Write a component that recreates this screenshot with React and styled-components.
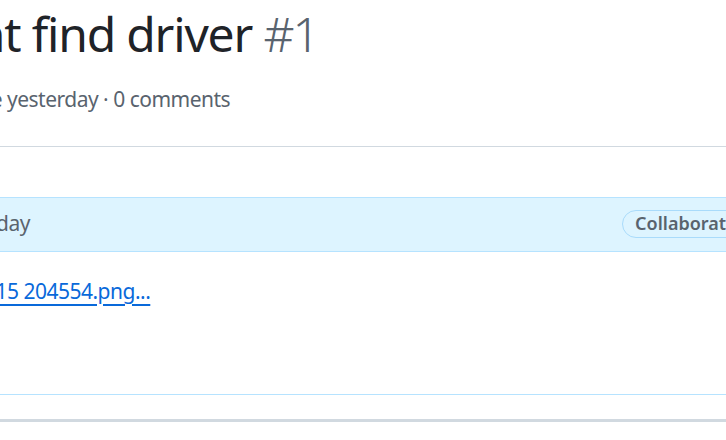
import React from "react";
import styled, { createGlobalStyle } from "styled-components";

const Global = createGlobalStyle`
  html, body { margin: 0; padding: 0; background: #ffffff; }
  body {
    font-family: "Segoe UI", "Noto Sans", "Liberation Sans", sans-serif;
    color: #1f2328;
  }
`;

const Viewport = styled.div`
  width: 726px;
  height: 440px;
  overflow: hidden;
  background: #ffffff;
`;

const Shifted = styled.div`
  margin-left: ${(p) => -p.$shift}px;
  white-space: nowrap;
`;

const Header = styled.header`
  display: flex;
  flex-direction: column;
  padding-top: 4px;
  border-bottom: 1px solid #d1d9e0;
  padding-bottom: 30px;
`;

const Title = styled.h1`
  margin: 0;
  font-size: 48px;
  font-weight: 400;
  line-height: 60px;
  letter-spacing: -1.2px;
  color: #1f2328;
`;

const IssueNumber = styled.span`
  color: #59636e;
  font-weight: 300;
  letter-spacing: -2px;
`;

const Meta = styled.div`
  margin-top: 20px;
  font-size: 21px;
  line-height: 31.5px;
  letter-spacing: -0.5px;
  color: #59636e;
`;

const Timeline = styled.section`
  padding-top: 50px;
`;

const CommentBox = styled.article`
  border-top: 1px solid #b6e3ff;
  border-bottom: 1px solid #b6e3ff;
`;

const CommentHeader = styled.div`
  display: flex;
  align-items: center;
  justify-content: space-between;
  height: 53px;
  background: #ddf4ff;
  border-bottom: 1px solid #b6e3ff;
  font-size: 21px;
  line-height: 31.5px;
  letter-spacing: -0.5px;
  color: #59636e;
`;

const Badge = styled.span`
  display: inline-flex;
  align-items: center;
  height: 26px;
  padding: 0 12px;
  margin-right: -32px;
  border: 1px solid #a9dbfb;
  border-radius: 999px;
  font-size: 18px;
  font-weight: 600;
  letter-spacing: 0;
  color: #59636e;
`;

const CommentBody = styled.div`
  padding: 24px 0 87px;
  font-size: 21px;
  line-height: 31.5px;
  letter-spacing: -0.5px;
`;

const FileLink = styled.a`
  color: #0969da;
  text-decoration: underline;
  text-decoration-thickness: 2px;
  text-underline-offset: 5px;
`;

const TimelineBreak = styled.div`
  margin-top: 24px;
  height: 3px;
  background: #d1d9e0;
`;

export default function App() {
  return (
    <Viewport>
      <Global />
      <Header>
        <Shifted $shift={79}>
          <Title>
            Cant find driver <IssueNumber>#1</IssueNumber>
          </Title>
        </Shifted>
        <Shifted $shift={236}>
          <Meta>octocat opened this issue yesterday · 0 comments</Meta>
        </Shifted>
      </Header>
      <Timeline>
        <CommentBox>
          <CommentHeader>
            <Shifted $shift={181}>commented yesterday</Shifted>
            <Badge>Collaborator</Badge>
          </CommentHeader>
          <CommentBody>
            <Shifted $shift={196}>
              <FileLink href="#">Screenshot 2025-03-15 204554.png...</FileLink>
            </Shifted>
          </CommentBody>
        </CommentBox>
        <TimelineBreak />
      </Timeline>
    </Viewport>
  );
}
